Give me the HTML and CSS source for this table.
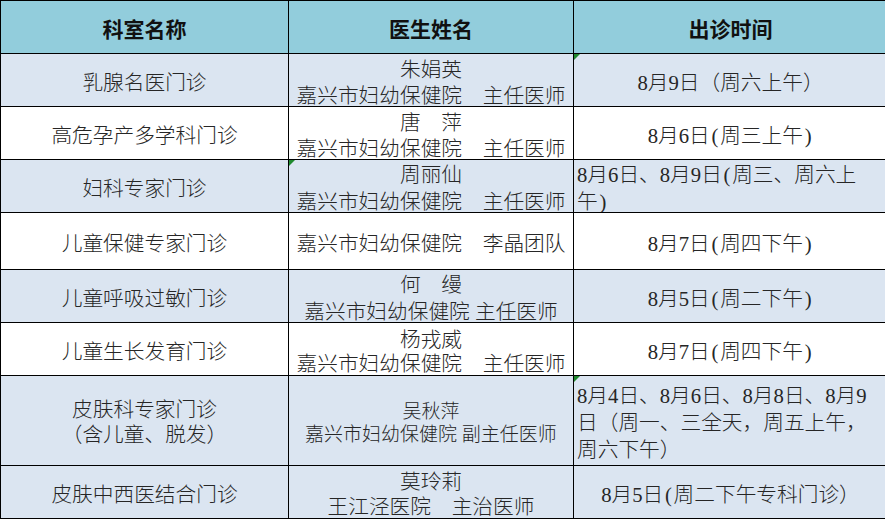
FILE: index.html
```html
<!DOCTYPE html>
<html lang="zh-CN">
<head>
<meta charset="utf-8">
<title>出诊时间表</title>
<link rel="stylesheet" href="styles.css">
</head>
<body>
<table class="sched">
  <colgroup><col class="c1"><col class="c2"><col class="c3"></colgroup>
  <thead>
    <tr class="head"><th>科室名称</th><th>医生姓名</th><th>出诊时间</th></tr>
  </thead>
  <tbody>
    <tr class="row blue">
      <td><div class="in">乳腺名医门诊</div></td>
      <td><div class="in">朱娟英<br>嘉兴市妇幼保健院　主任医师</div></td>
      <td class="flagged"><span class="flag"></span><div class="in">8月9日（周六上午）</div></td>
    </tr>
    <tr class="row white">
      <td><div class="in">高危孕产多学科门诊</div></td>
      <td><div class="in">唐　萍<br>嘉兴市妇幼保健院　主任医师</div></td>
      <td><div class="in">8月6日<span class="hp">(</span>周三上午<span class="hp">)</span></div></td>
    </tr>
    <tr class="row blue">
      <td><div class="in">妇科专家门诊</div></td>
      <td class="flagged"><span class="flag"></span><div class="in wide">周丽仙<br>嘉兴市妇幼保健院　主任医师</div></td>
      <td class="left"><div class="in wide">8月6日、8月9日<span class="hp">(</span>周三、周六上<br>午<span class="hp">)</span></div></td>
    </tr>
    <tr class="row tall white">
      <td><div class="in">儿童保健专家门诊</div></td>
      <td><div class="in">嘉兴市妇幼保健院　李晶团队</div></td>
      <td><div class="in">8月7日<span class="hp">(</span>周四下午<span class="hp">)</span></div></td>
    </tr>
    <tr class="row blue">
      <td><div class="in">儿童呼吸过敏门诊</div></td>
      <td><div class="in wide">何　缦<br>嘉兴市妇幼保健院 主任医师</div></td>
      <td><div class="in">8月5日<span class="hp">(</span>周二下午<span class="hp">)</span></div></td>
    </tr>
    <tr class="row white">
      <td><div class="in">儿童生长发育门诊</div></td>
      <td><div class="in narrow">杨戎威<br>嘉兴市妇幼保健院　主任医师</div></td>
      <td><div class="in">8月7日<span class="hp">(</span>周四下午<span class="hp">)</span></div></td>
    </tr>
    <tr class="row big blue">
      <td><div class="in pair">皮肤科专家门诊<br>（含儿童、脱发）</div></td>
      <td><div class="in small">吴秋萍<br>嘉兴市妇幼保健院 副主任医师</div></td>
      <td class="flagged left"><span class="flag"></span><div class="in wide">8月4日、8月6日、8月8日、8月9<br>日（周一、三全天，周五上午，<br>周六下午）</div></td>
    </tr>
    <tr class="row last blue">
      <td><div class="in">皮肤中西医结合门诊</div></td>
      <td><div class="in pair">莫玲莉<br>王江泾医院　主治医师</div></td>
      <td><div class="in">8月5日<span class="hp">(</span>周二下午专科门诊）</div></td>
    </tr>
  </tbody>
</table>
</body>
</html>
```

FILE: styles.css
```css
html, body {
  margin: 0;
  padding: 0;
  overflow: hidden;
  background: #ffffff;
}

.sched {
  width: 887px;
  table-layout: fixed;
  border-collapse: collapse;
  font-family: "Liberation Serif", "Noto Sans CJK SC", serif;
  font-size: 20.7px;
  font-weight: 300;
  color: #262626;
}

.c1 { width: 288px; }
.c2 { width: 285px; }
.c3 { width: 314px; }

.sched th,
.sched td {
  border: 1.5px solid #000;
  padding: 5px 0 0 0;
  text-align: center;
  vertical-align: middle;
  white-space: nowrap;
  overflow: hidden;
}

.in {
  line-height: 26px;
  margin: -4px 0;
}
.in.wide { line-height: 27px; }
.in.narrow { line-height: 24px; }
.in.pair { line-height: 25px; }
.in.small { font-size: 19px; line-height: 23px; }

.hp {
  display: inline-block;
  width: 0.5em;
  text-align: center;
}

.head { height: 53px; background: #92cddc; }
.head th {
  font-family: "Noto Sans CJK SC", sans-serif;
  font-weight: 700;
  font-size: 21px;
  line-height: 26px;
  color: #111;
  padding-top: 2px;
}

.row { height: 53px; }
.row.tall { height: 57px; }
.row.big { height: 90px; }
.row.last { height: 53px; }

.blue { background: #dbe5f1; }
.white { background: #ffffff; }

.sched td.left {
  text-align: left;
  padding-left: 3px;
}

.flagged { position: relative; }
.flag {
  position: absolute;
  left: 0;
  top: 0;
  width: 0;
  height: 0;
  border-top: 6px solid #1f8a2e;
  border-right: 6px solid transparent;
}
```
